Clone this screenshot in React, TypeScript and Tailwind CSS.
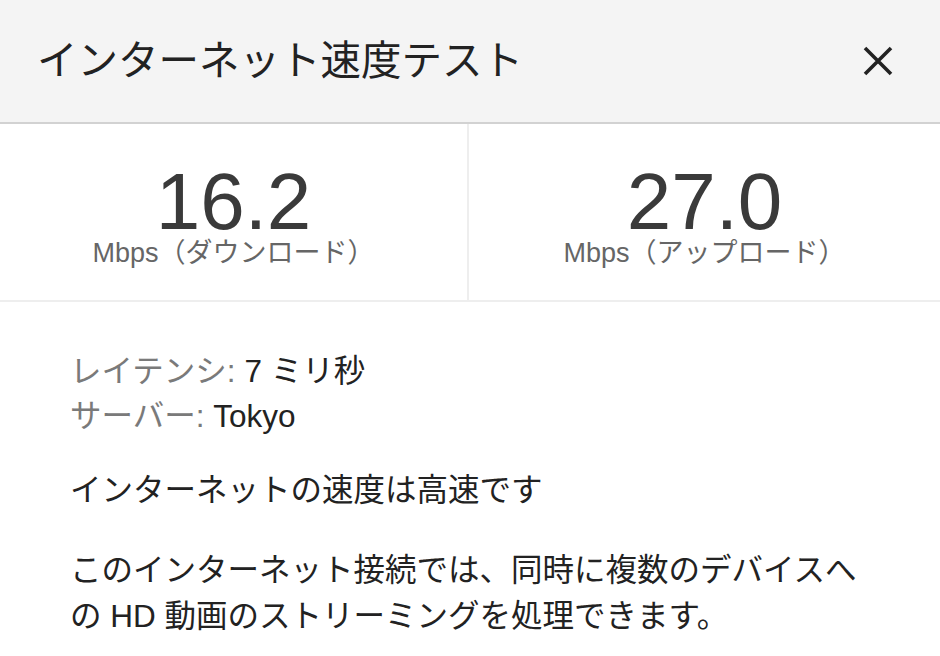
import React from "react";

const FONT = { fontFamily: '"Liberation Sans", "Noto Sans CJK JP", sans-serif' };

export default function App() {
  return (
    <div className="w-[940px] h-[656px] bg-white overflow-hidden" style={FONT}>
      <div className="h-[124px] bg-[#f4f4f4] border-b-2 border-[#d2d2d2] flex items-center justify-between pl-[37px] pr-[47px]">
        <div className="text-[40.5px] text-[#222] leading-none">インターネット速度テスト</div>
        <svg width="30" height="30" viewBox="0 0 30 30" className="shrink-0">
          <path d="M2 2 L28 28 M28 2 L2 28" stroke="#222" strokeWidth="3.6" strokeLinecap="butt" />
        </svg>
      </div>
      <div className="flex h-[178px] border-b-2 border-[#eeeeee]">
        <div className="w-[469px] border-r-2 border-[#eeeeee] flex flex-col items-center pt-[41px]">
          <div className="text-[80px] leading-[74px] text-[#3a3a3a]">16.2</div>
          <div className="text-[27px] leading-[26px] text-[#666] mt-[1px]">Mbps（ダウンロード）</div>
        </div>
        <div className="flex-1 flex flex-col items-center pt-[41px]">
          <div className="text-[80px] leading-[74px] text-[#3a3a3a]">27.0</div>
          <div className="text-[27px] leading-[26px] text-[#666] mt-[1px]">Mbps（アップロード）</div>
        </div>
      </div>
      <div className="px-[70px] pt-[47px]">
        <div className="text-[31.5px] leading-[45px]">
          <div>
            <span className="text-[#7a7a7a]">レイテンシ: </span>
            <span className="text-[#222]">7 ミリ秒</span>
          </div>
          <div>
            <span className="text-[#7a7a7a]">サーバー: </span>
            <span className="text-[#222]">Tokyo</span>
          </div>
        </div>
        <p className="mt-[30px] text-[31.5px] leading-[43px] text-[#222]">インターネットの速度は高速です</p>
        <p className="mt-[35px] text-[31.5px] leading-[46px] text-[#222]">
          このインターネット接続では、同時に複数のデバイスへの HD 動画のストリーミングを処理できます。
        </p>
      </div>
    </div>
  );
}
